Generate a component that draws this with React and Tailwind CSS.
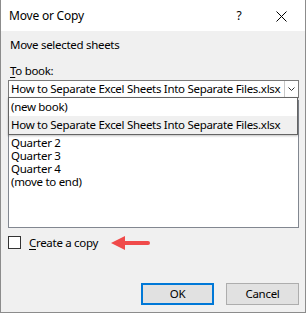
import React from "react";

export default function App() {
  return (
    <div
      className="w-[306px] h-[313px] flex flex-col bg-[#f0f0f0] border-r border-b border-l border-[#8c8c8c] text-[11.5px] tracking-[-0.3px] text-black overflow-hidden"
      style={{ fontFamily: '"Noto Sans", "Open Sans", sans-serif' }}
    >
      {/* Title bar */}
      <div className="h-[31px] bg-white flex items-center pl-[8px] shrink-0 pt-[1px]">
        <span className="leading-none text-[12px] tracking-[-0.2px]">Move or Copy</span>
        <span className="ml-auto w-[14px] text-center leading-none text-[12px]">?</span>
        <span className="ml-[30px] mr-[18px] flex items-center">
          <svg width="11" height="11" viewBox="0 0 11 11">
            <path d="M0.5 0.5 L10.5 10.5 M10.5 0.5 L0.5 10.5" stroke="#000" strokeWidth="1" fill="none" />
          </svg>
        </span>
      </div>

      <div className="flex flex-col pl-[7px] pr-[6px]">
        <div className="pt-[6px] h-[21px] pl-[2px] leading-[15px]">Move selected sheets</div>
        <div className="mt-[11px] h-[15px] pl-[2px] leading-[15px]">
          <span className="underline underline-offset-2">T</span>o book:
        </div>

        {/* Combobox + list area */}
        <div className="relative mt-[2px]">
          <div className="h-[18px] bg-white border border-[#7a7a7a] flex items-center">
            <span className="pl-[2px] leading-none whitespace-nowrap">
              How to Separate Excel Sheets Into Separate Files.xlsx
            </span>
            <span className="ml-auto h-full w-[14px] border-l border-[#c8c8c8] flex items-center justify-center">
              <svg width="7" height="4" viewBox="0 0 7 4">
                <path d="M0.5 0.5 L3.5 3.5 L6.5 0.5" stroke="#333" strokeWidth="1" fill="none" />
              </svg>
            </span>
          </div>

          {/* list box */}
          <div className="mt-[2px] h-[128px] bg-white border border-[#828790] pt-[35px] pl-[2px]">
            <div className="h-[13px] leading-[13px]">Quarter 2</div>
            <div className="h-[13px] leading-[13px]">Quarter 3</div>
            <div className="h-[13px] leading-[13px]">Quarter 4</div>
            <div className="h-[13px] leading-[13px]">(move to end)</div>
          </div>

          {/* dropdown popup over list */}
          <div className="absolute left-0 right-[1px] top-[17px] bg-white border border-[#646464] shadow-[0_1px_2px_rgba(0,0,0,0.25)]">
            <div className="h-[18px] flex items-center pl-[2px] whitespace-nowrap">(new book)</div>
            <div className="h-[18px] flex items-center pl-[2px] bg-[#f0f0f0] whitespace-nowrap">
              How to Separate Excel Sheets Into Separate Files.xlsx
            </div>
          </div>
        </div>

        {/* checkbox row */}
        <div className="mt-[8px] flex items-center h-[13px]">
          <div className="w-[13px] h-[13px] bg-white border border-[#333]" />
          <span className="ml-[8px] leading-none">
            <span className="underline underline-offset-2">C</span>reate a copy
          </span>
          <svg className="ml-[13px]" width="40" height="16" viewBox="0 0 40 16">
            <path d="M0 8 L14 1 L14 15 Z" fill="#f04a4a" />
            <path d="M13 8 L37 8" stroke="#f04a4a" strokeWidth="4" strokeLinecap="round" />
          </svg>
        </div>

        {/* buttons */}
        <div className="mt-[34px] flex justify-end gap-[12px]">
          <div className="w-[73px] h-[22px] bg-[#e1e1e1] border-2 border-[#0078d7] flex items-center justify-center">OK</div>
          <div className="w-[73px] h-[22px] bg-[#e1e1e1] border border-[#adadad] flex items-center justify-center">Cancel</div>
        </div>
      </div>
    </div>
  );
}
